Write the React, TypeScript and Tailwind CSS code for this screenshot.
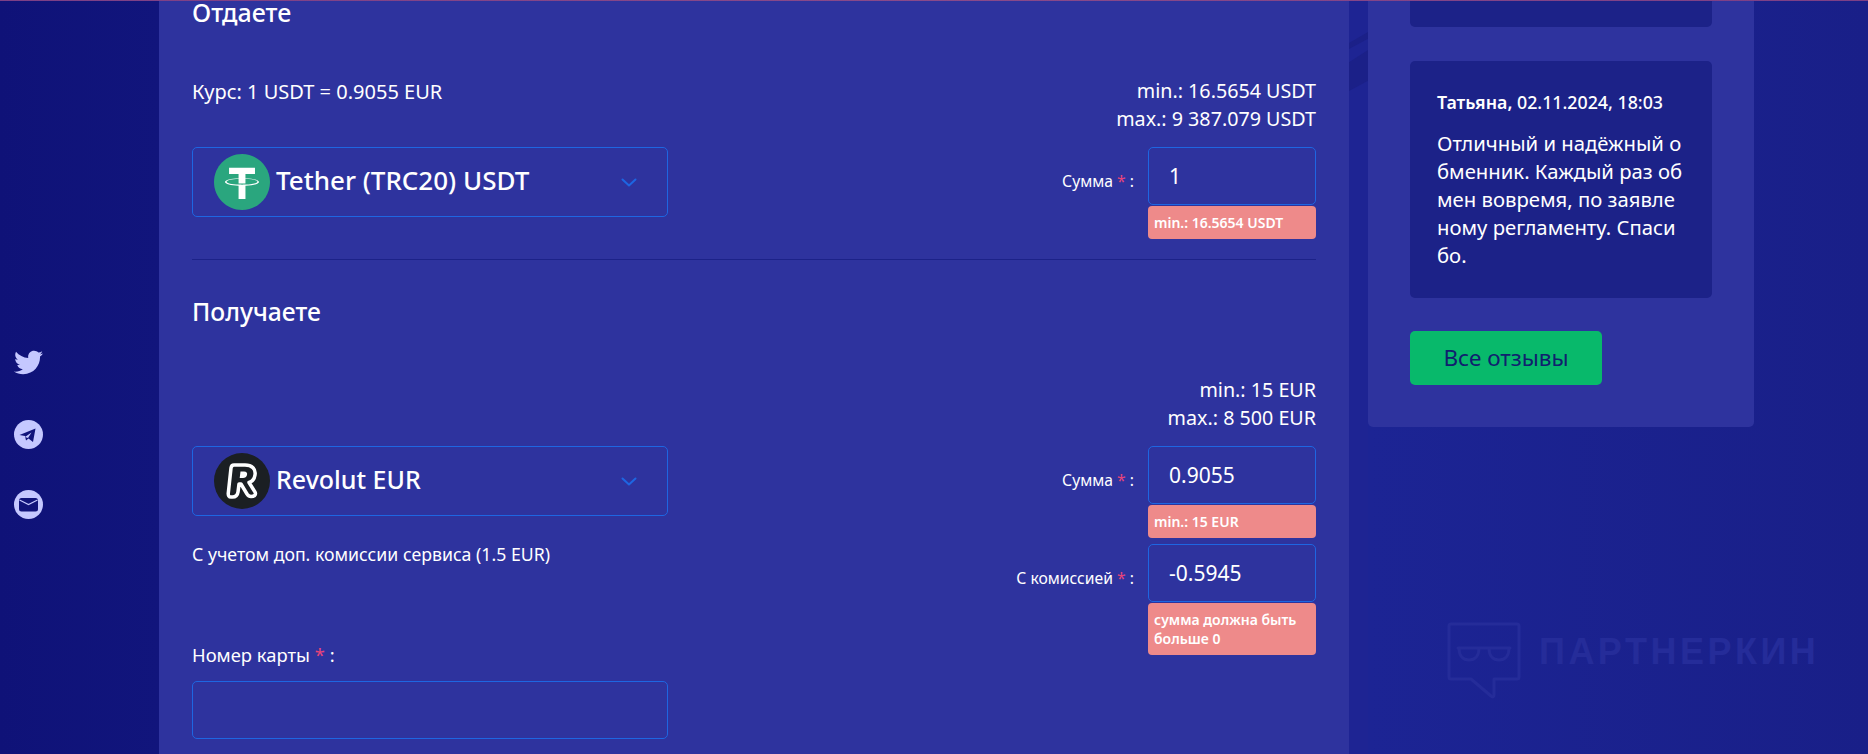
import React from "react";
import { FaTwitter } from "react-icons/fa";

const Star = () => <span className="text-[#e8447a]">*</span>;

const Chevron = () => (
  <svg width="16" height="9" viewBox="0 0 16 9" fill="none" className="shrink-0">
    <path d="M1.5 1.5 8 7.5l6.5-6" stroke="#1e66e2" strokeWidth="2" strokeLinecap="round" strokeLinejoin="round" />
  </svg>
);

const TetherLogo = () => (
  <svg width="56" height="56" viewBox="0 0 2000 2000" className="shrink-0">
    <path fill="#2aa67e" d="M1000 0c552.26 0 1000 447.74 1000 1000s-447.76 1000-1000 1000S0 1552.38 0 1000 447.68 0 1000 0" />
    <path fill="#fff" d="M1123.42 866.76V718H1463.6V491.34H537.28V718H877.5V866.64C601 879.34 393.1 934.1 393.1 999.7s208 120.36 484.4 133.14v476.5h246V1132.8c276-12.74 483.48-67.46 483.48-133s-207.48-120.26-483.48-133m0 225.64v-.12c-6.94.44-42.6 2.58-122 2.58-63.48 0-108.14-1.8-123.88-2.62v.2C633.34 1081.66 451 1039.12 451 988.22S633.36 894.84 877.62 884V1050.1c16 1.1 61.76 3.8 124.92 3.8 75.86 0 114-3.16 121-3.8V884c243.8 10.86 425.72 53.44 425.72 104.16s-182 93.32-425.72 104.18" />
  </svg>
);

const RevolutLogo = () => (
  <svg width="56" height="56" viewBox="0 0 56 56" className="shrink-0">
    <circle cx="28" cy="28" r="28" fill="#1b1f23" />
    <path
      d="M20 12h11c7 0 11 4 10 10-.5 4-3 6.500-6 7.500l6 9.500c1.500 3-1 4.500-4 4.500-2 0-3-1-4-2.500L27 31h-2l-1 8c-.5 3.500-2.500 5-5.500 5H17c-2 0-3-1.500-2.700-4L17 15c.3-2 1-3 3-3Z"
      fill="#1b1f23"
      stroke="#fff"
      strokeWidth="3.500"
      strokeLinejoin="round"
    />
    <path d="M26.500 18.500h3.500c2.500 0 3.500 1.500 3 3.500-.4 2-2 3-4 3h-3.300Z" fill="#fff" />
  </svg>
);

const TelegramIcon = () => (
  <svg width="29" height="29" viewBox="0 0 29 29">
    <circle cx="14.500" cy="14.500" r="14.500" fill="#c5c8ff" />
    <path d="M5.500 15 21.500 8.500 19 22l-4.500-3.500-2.500 2-1-4.500Z" fill="#10137a" />
    <path d="M11 17 17.500 12.500 14 18Z" fill="#c5c8ff" />
  </svg>
);

const MailIcon = () => (
  <svg width="29" height="29" viewBox="0 0 29 29">
    <circle cx="14.500" cy="14.500" r="14.500" fill="#c5c8ff" />
    <rect x="5" y="8" width="19" height="13.500" rx="2.500" fill="#10137a" />
    <path d="M5.500 10 14.500 14.500 23.500 10" fill="none" stroke="#c5c8ff" strokeWidth="1.200" />
  </svg>
);

const PartnerkinIcon = () => (
  <svg width="74" height="80" viewBox="0 0 74 80" fill="none" stroke="#252c99" strokeWidth="3" strokeLinejoin="round" strokeLinecap="round">
    <path d="M4 3h66a2 2 0 0 1 2 2v51a2 2 0 0 1-2 2H47v16c0 2-1.500 2.500-3 1L24 58H4a2 2 0 0 1-2-2V5a2 2 0 0 1 2-2Z" />
    <path d="M11 27h52M12 27c0 8 4 12 10 12s10-4 10-12M42 27c0 8 4 12 10 12s10-4 10-12" />
  </svg>
);

function CurrencySelect({ logo, name, big }: { logo: React.ReactNode; name: string; big?: boolean }) {
  return (
    <div className="flex h-[70px] w-[476px] items-center rounded-[5px] border border-[#1e66e2] pl-[21px] pr-[30px]">
      {logo}
      <span className={big ? "ml-[6px] flex-1 pb-[4px] text-[26px] font-medium leading-none" : "ml-[6px] flex-1 pb-[4px] text-[25px] font-medium leading-none"}>{name}</span>
      <Chevron />
    </div>
  );
}

function AmountField({ label, value, error }: { label: string; value: string; error: React.ReactNode }) {
  return (
    <div className="flex items-start">
      <label className="mr-[14px] mt-[25px] text-[15.700px] leading-[19px]">
        {label} <Star /> :
      </label>
      <div className="w-[168px]">
        <input
          readOnly
          value={value}
          className="h-[58px] w-full rounded-[5px] border border-[#1e66e2] bg-transparent pb-[1px] pl-[20px] text-[21px] text-white outline-none"
        />
        <div className="mt-px rounded-[4px] bg-[#ee8a8a] px-[6px] py-[7px] text-[14px] font-semibold leading-[19px] text-white">
          {error}
        </div>
      </div>
    </div>
  );
}

function Limits({ min, max }: { min: string; max: string }) {
  return (
    <div className="text-right text-[19.700px] leading-[27.500px]">
      <div>{min}</div>
      <div>{max}</div>
    </div>
  );
}

export default function App() {
  return (
    <div className="relative h-[754px] w-[1868px] overflow-hidden bg-[#191f88] font-['Noto_Sans',sans-serif] text-white">
      <div className="h-px bg-gradient-to-r from-[#7d3f86] via-[#8a4a8a] to-[#7d3f86]" />
      <div className="flex items-start">
        <aside className="flex h-[753px] w-[159px] shrink-0 flex-col items-start gap-[41px] bg-gradient-to-r from-[#0f1278] to-[#11157c] pl-[14px] pt-[347px]">
          <FaTwitter className="mb-[2px] h-[29px] w-[29px] text-[#c5c8ff]" />
          <TelegramIcon />
          <MailIcon />
        </aside>

        <main className="h-[753px] w-[1190px] shrink-0 bg-[#2e339e] pl-[33px] pr-[33px]">
          <h2 className="text-[25px] font-medium leading-[22px]">Отдаете</h2>
          <div className="mt-[54px] flex items-start justify-between">
            <div className="pt-[1px] text-[20px] leading-[27px]">Курс: 1 USDT = 0.9055 EUR</div>
            <Limits min="min.: 16.5654 USDT" max="max.: 9 387.079 USDT" />
          </div>
          <div className="mt-[15px] flex items-start justify-between">
            <CurrencySelect big logo={<TetherLogo />} name="Tether (TRC20) USDT" />
            <AmountField label="Сумма" value="1" error="min.: 16.5654 USDT" />
          </div>
          <div className="mt-[20px] h-px bg-[#1c2288]" />
          <h2 className="mt-[37px] text-[24.700px] font-medium leading-[30px]">Получаете</h2>
          <div className="mt-[49px]">
            <Limits min="min.: 15 EUR" max="max.: 8 500 EUR" />
          </div>
          <div className="mt-[15px] flex items-start justify-between">
            <div>
              <CurrencySelect logo={<RevolutLogo />} name="Revolut EUR" />
              <p className="mt-[25px] text-[17.700px] leading-[26px]">С учетом доп. комиссии сервиса (1.5 EUR)</p>
              <label className="mt-[74px] block text-[18.400px] leading-[27px]">
                Номер карты <Star /> :
              </label>
              <input readOnly className="mt-[13px] h-[58px] w-[476px] rounded-[5px] border border-[#1e66e2] bg-transparent outline-none" />
            </div>
            <div className="flex flex-col items-end gap-[6px]">
              <AmountField label="Сумма" value="0.9055" error="min.: 15 EUR" />
              <AmountField
                label="С комиссией"
                value="-0.5945"
                error={
                  <>
                    сумма должна быть
                    <br />
                    больше 0
                  </>
                }
              />
            </div>
          </div>
        </main>

        <div className="relative h-[753px] w-[19px] shrink-0 overflow-hidden bg-[#1e2493]">
          <div className="absolute left-0 top-[31px] h-[17px] w-[19px] bg-[#1b2088] [clip-path:polygon(0_65%,100%_0,100%_40%,0_100%)]" />
          <div className="absolute left-0 top-[49px] h-[41px] w-[19px] bg-[#1b2088] [clip-path:polygon(0_30%,100%_0,100%_75%,0_100%)]" />
        </div>

        <div className="h-[753px] flex-1 bg-gradient-to-r from-[#1c2494] to-[#191f88]">
          <section className="w-[386px] rounded-b-[5px] bg-[#2e339e] px-[42px] pb-[42px]">
            <div className="h-[26px] rounded-b-[5px] bg-[#1c2288]" />
            <article className="mt-[34px] h-[237px] rounded-[5px] bg-[#1c2288] px-[27px] pt-[30px]">
              <div className="text-[17.800px] font-semibold leading-[22px]">Татьяна, <span className="font-medium">02.11.2024, 18:03</span></div>
              <p className="mt-[16px] text-[20.300px] leading-[28px]">
                <span className="block">Отличный и надёжный о</span>
                <span className="block">бменник. Каждый раз об</span>
                <span className="block">мен вовремя, по заявле</span>
                <span className="block">ному регламенту. Спаси</span>
                <span className="block">бо.</span>
              </p>
            </article>
            <button className="mt-[33px] flex h-[54px] w-[192px] items-center justify-center rounded-[5px] bg-[#08b96b] text-[22.500px] text-[#10206e]">
              Все отзывы
            </button>
          </section>
          <div className="ml-[79px] mt-[194px] flex items-start gap-[18px]">
            <PartnerkinIcon />
            <span className="mt-[11px] font-['Liberation_Sans',sans-serif] text-[36px] font-bold leading-[40px] tracking-[3.500px] text-[#252c99]">ПАРТНЕРКИН</span>
          </div>
        </div>
      </div>
    </div>
  );
}
